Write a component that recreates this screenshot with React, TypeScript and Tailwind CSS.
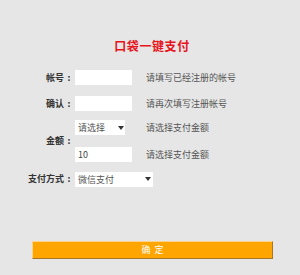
import React from 'react';

function Arrow() {
  return (
    <svg width="6" height="4" viewBox="0 0 6 4" className="shrink-0">
      <path d="M0 0 H6 L3 4 Z" fill="#333" />
    </svg>
  );
}

function FakeSelect({ value, width, arrowGap }: { value: string; width: string; arrowGap: string }) {
  return (
    <div className={`${width} h-[15px] bg-white flex items-center pl-[3px] text-[#555]`}>
      <span className="leading-[15px]">{value}</span>
      <span className={arrowGap}>
        <Arrow />
      </span>
    </div>
  );
}

function Label({ text }: { text: string }) {
  return (
    <div className="w-[75px] flex justify-end pr-[1px] font-bold text-[#333]">
      <span>{text}</span>
      <span className="w-[10px] text-center">:</span>
    </div>
  );
}

export default function App() {
  return (
    <div className="w-[300px] h-[275px] bg-[#e6e6e6] text-[9px] font-['Microsoft_YaHei','Noto_Sans_CJK_SC',sans-serif] overflow-hidden">
      <div className="pt-[40px] text-center text-[12px] leading-[12px] font-bold text-[#e6141b] tracking-[0.6px] pl-[4px]">
        口袋一键支付
      </div>

      <div className="mt-[18px] flex flex-col">
        <div className="flex items-center h-[15px]">
          <Label text="帐号" />
          <div className="w-[57px] h-[15px] bg-white" />
          <div className="ml-[14px] text-[#555]">请填写已经注册的帐号</div>
        </div>

        <div className="mt-[11px] flex items-center h-[15px]">
          <Label text="确认" />
          <div className="w-[57px] h-[15px] bg-white" />
          <div className="ml-[14px] text-[#555]">请再次填写注册帐号</div>
        </div>

        <div className="mt-[9px] flex items-center">
          <Label text="金额" />
          <div className="flex flex-col">
            <div className="flex items-center h-[15px]">
              <FakeSelect value="请选择" width="w-[50px]" arrowGap="ml-[13px]" />
              <div className="ml-[21px] text-[#555]">请选择支付金额</div>
            </div>
            <div className="mt-[12px] flex items-center h-[15px]">
              <div className="w-[57px] h-[15px] bg-white pl-[3px] leading-[15px] text-[#444]">10</div>
              <div className="ml-[14px] text-[#555]">请选择支付金额</div>
            </div>
          </div>
        </div>

        <div className="mt-[9px] flex items-center h-[16px]">
          <Label text="支付方式" />
          <FakeSelect value="微信支付" width="w-[78px]" arrowGap="ml-[31px]" />
        </div>
      </div>

      <div className="mt-[54px] mx-[32px] w-[241px] h-[18px] bg-[#ffa500] border-t border-l border-t-[#ffd38a] border-l-[#ffd38a] border-b border-r border-b-[#a8752a] border-r-[#a8752a] flex items-center justify-center text-white text-[9px] tracking-[4px] pl-[4px]">
        确定
      </div>
    </div>
  );
}
